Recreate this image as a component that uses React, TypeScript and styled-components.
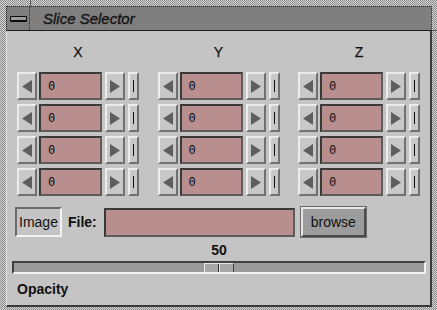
import React from "react";
import styled, { createGlobalStyle } from "styled-components";

const Global = createGlobalStyle`
  html, body { margin: 0; padding: 0; }
  body { background: #c4c4c4; font-family: "Liberation Sans", Arial, sans-serif; }
`;

const Frame = styled.div`
  position: relative;
  width: 437px;
  height: 310px;
  box-sizing: border-box;
  padding: 6px 5px 3px 6px;
  background: repeating-conic-gradient(#d4d4d4 0% 25%, #8a8a8a 0% 50%) 0 0 / 2px 2px;
  overflow: hidden;
`;

const Notch = styled.div<{ $v?: boolean }>`
  position: absolute;
  background: #555;
  ${(p) =>
    p.$v
      ? "top: 0; left: 30px; width: 1px; height: 6px;"
      : "right: 0; top: 30px; width: 5px; height: 1px;"}
`;

const Window = styled.div`
  display: flex;
  flex-direction: column;
  height: 100%;
`;

const TitleBar = styled.div`
  height: 25px;
  box-sizing: border-box;
  display: flex;
  align-items: center;
  background: #7f7f7f;
  border: 1px dotted #2a2a2a;
  border-bottom: 1px solid #1e1e1e;
`;

const MenuButton = styled.div`
  width: 22px;
  align-self: stretch;
  display: flex;
  align-items: center;
  justify-content: center;
  border-right: 1px dotted #2a2a2a;
`;

const Dash = styled.div`
  width: 17px;
  height: 6px;
  box-sizing: border-box;
  border: 1px solid #0c0c0c;
  border-bottom-width: 2px;
  border-radius: 1px;
  background: #9c9c9c;
`;

const Title = styled.div`
  margin-left: 13px;
  font-size: 15px;
  font-style: italic;
  color: #141414;
  -webkit-text-stroke: 0.35px #141414;
`;

const Content = styled.div`
  flex: 1;
  display: flex;
  flex-direction: column;
  background: #c4c4c4;
  border-left: 1px solid #e4e4e4;
  border-right: 2px solid #3a3a3a;
  border-bottom: 2px solid #3a3a3a;
`;

const Columns = styled.div`
  display: grid;
  grid-template-columns: repeat(3, 122px);
  column-gap: 18.5px;
  padding: 13px 0 0 10px;
`;

const Column = styled.div`
  display: flex;
  flex-direction: column;
  gap: 4px;
`;

const Header = styled.div`
  height: 16px;
  line-height: 16px;
  margin-bottom: 8px;
  text-align: center;
  font-size: 14px;
  color: #111;
  -webkit-text-stroke: 0.25px #111;
`;

const Row = styled.div`
  display: flex;
  height: 28px;
`;

const BevelButton = styled.div<{ $w: number }>`
  width: ${(p) => p.$w}px;
  height: 100%;
  box-sizing: border-box;
  display: flex;
  align-items: center;
  justify-content: center;
  background: #c8c8c8;
  border: 2px solid;
  border-color: #ececec #707070 #707070 #ececec;
`;

const BarLine = styled.div`
  width: 1px;
  height: 12px;
  background: #111;
`;

const Field = styled.div<{ $w: number }>`
  width: ${(p) => p.$w}px;
  height: 100%;
  box-sizing: border-box;
  background: #b88e8e;
  border: 2px solid;
  border-color: #3a3a3a #5c5c5c #5c5c5c #3a3a3a;
  display: flex;
  align-items: center;
  padding-left: 7px;
  font-family: "DejaVu Sans Mono", "Liberation Mono", monospace;
  font-size: 12px;
  color: #111;
`;

const FieldGap = styled.div<{ $w: number }>`
  width: ${(p) => p.$w}px;
  flex: none;
`;

const BottomRow = styled.div`
  display: flex;
  align-items: center;
  height: 30px;
  margin-top: 11px;
  padding-left: 8px;
`;

const Toggle = styled.div`
  width: 47px;
  height: 30px;
  box-sizing: border-box;
  display: flex;
  align-items: center;
  justify-content: center;
  border: 2px solid;
  border-color: #6c6c6c #f2f2f2 #f2f2f2 #6c6c6c;
  font-size: 14px;
  color: #111;
`;

const Label = styled.div<{ $ml?: number }>`
  margin-left: ${(p) => p.$ml ?? 0}px;
  font-size: 14px;
  font-weight: bold;
  color: #111;
`;

const FileField = styled(Field)`
  height: 29px;
  margin-left: 7px;
`;

const Browse = styled.div`
  margin-left: 6px;
  width: 65px;
  height: 30px;
  box-sizing: border-box;
  display: flex;
  align-items: center;
  justify-content: center;
  background: #9c9c9c;
  border: 2px solid;
  border-color: #e6e6e6 #4a4a4a #4a4a4a #e6e6e6;
  outline: 1px solid #6a6a6a;
  font-size: 14px;
  color: #111;
`;

const SliderBlock = styled.div`
  display: flex;
  flex-direction: column;
  padding-left: 5px;
  width: 414px;
`;

const Value = styled.div`
  margin-top: 5px;
  height: 16px;
  line-height: 16px;
  text-align: center;
  font-size: 14px;
  font-weight: bold;
  color: #111;
`;

const Trough = styled.div`
  position: relative;
  margin-top: 3px;
  height: 13px;
  box-sizing: border-box;
  background: #9a9a9a;
  border: 2px solid;
  border-color: #404040 #f0f0f0 #f0f0f0 #404040;
`;

const Thumb = styled.div`
  position: absolute;
  top: 0;
  bottom: 0;
  width: 30px;
  box-sizing: border-box;
  display: flex;
  background: #a8a8a8;
  border-left: 1px solid #e6e6e6;
  border-top: 1px solid #e6e6e6;
  border-right: 1px solid #404040;
`;

const ThumbHalf = styled.div<{ $last?: boolean }>`
  flex: 1;
  border-right: ${(p) => (p.$last ? "none" : "1px solid #303030")};
  border-left: ${(p) => (p.$last ? "1px solid #e0e0e0" : "none")};
`;

const Opacity = styled(Label)`
  margin-top: 7px;
  padding-left: 10px;
`;

const Arrow = ({ dir }: { dir: "left" | "right" }) => (
  <svg width="10" height="13" viewBox="0 0 10 13">
    {dir === "left" ? (
      <polygon points="0,6.5 10,0 10,13" fill="#5e5e5e" />
    ) : (
      <polygon points="0,0 10,6.5 0,13" fill="#5e5e5e" />
    )}
  </svg>
);

const Spinner = () => (
  <Row>
    <BevelButton $w={20}>
      <Arrow dir="left" />
    </BevelButton>
    <FieldGap $w={2} />
    <Field $w={63}>0</Field>
    <FieldGap $w={3} />
    <BevelButton $w={20}>
      <Arrow dir="right" />
    </BevelButton>
    <FieldGap $w={3} />
    <BevelButton $w={11}>
      <BarLine />
    </BevelButton>
  </Row>
);

export default function App() {
  const value = 50;
  return (
    <>
      <Global />
      <Frame>
        <Notch $v />
        <Notch />
        <Window>
          <TitleBar>
            <MenuButton>
              <Dash />
            </MenuButton>
            <Title>Slice Selector</Title>
          </TitleBar>
          <Content>
            <Columns>
              {["X", "Y", "Z"].map((axis) => (
                <Column key={axis}>
                  <Header>{axis}</Header>
                  {[0, 1, 2, 3].map((i) => (
                    <Spinner key={i} />
                  ))}
                </Column>
              ))}
            </Columns>
            <BottomRow>
              <Toggle>Image</Toggle>
              <Label $ml={6}>File:</Label>
              <FileField $w={191} />
              <Browse>browse</Browse>
            </BottomRow>
            <SliderBlock>
              <Value>{value}</Value>
              <Trough>
                <Thumb style={{ left: `calc(${value}% - 15px)` }}>
                  <ThumbHalf />
                  <ThumbHalf $last />
                </Thumb>
              </Trough>
            </SliderBlock>
            <Opacity>Opacity</Opacity>
          </Content>
        </Window>
      </Frame>
    </>
  );
}
